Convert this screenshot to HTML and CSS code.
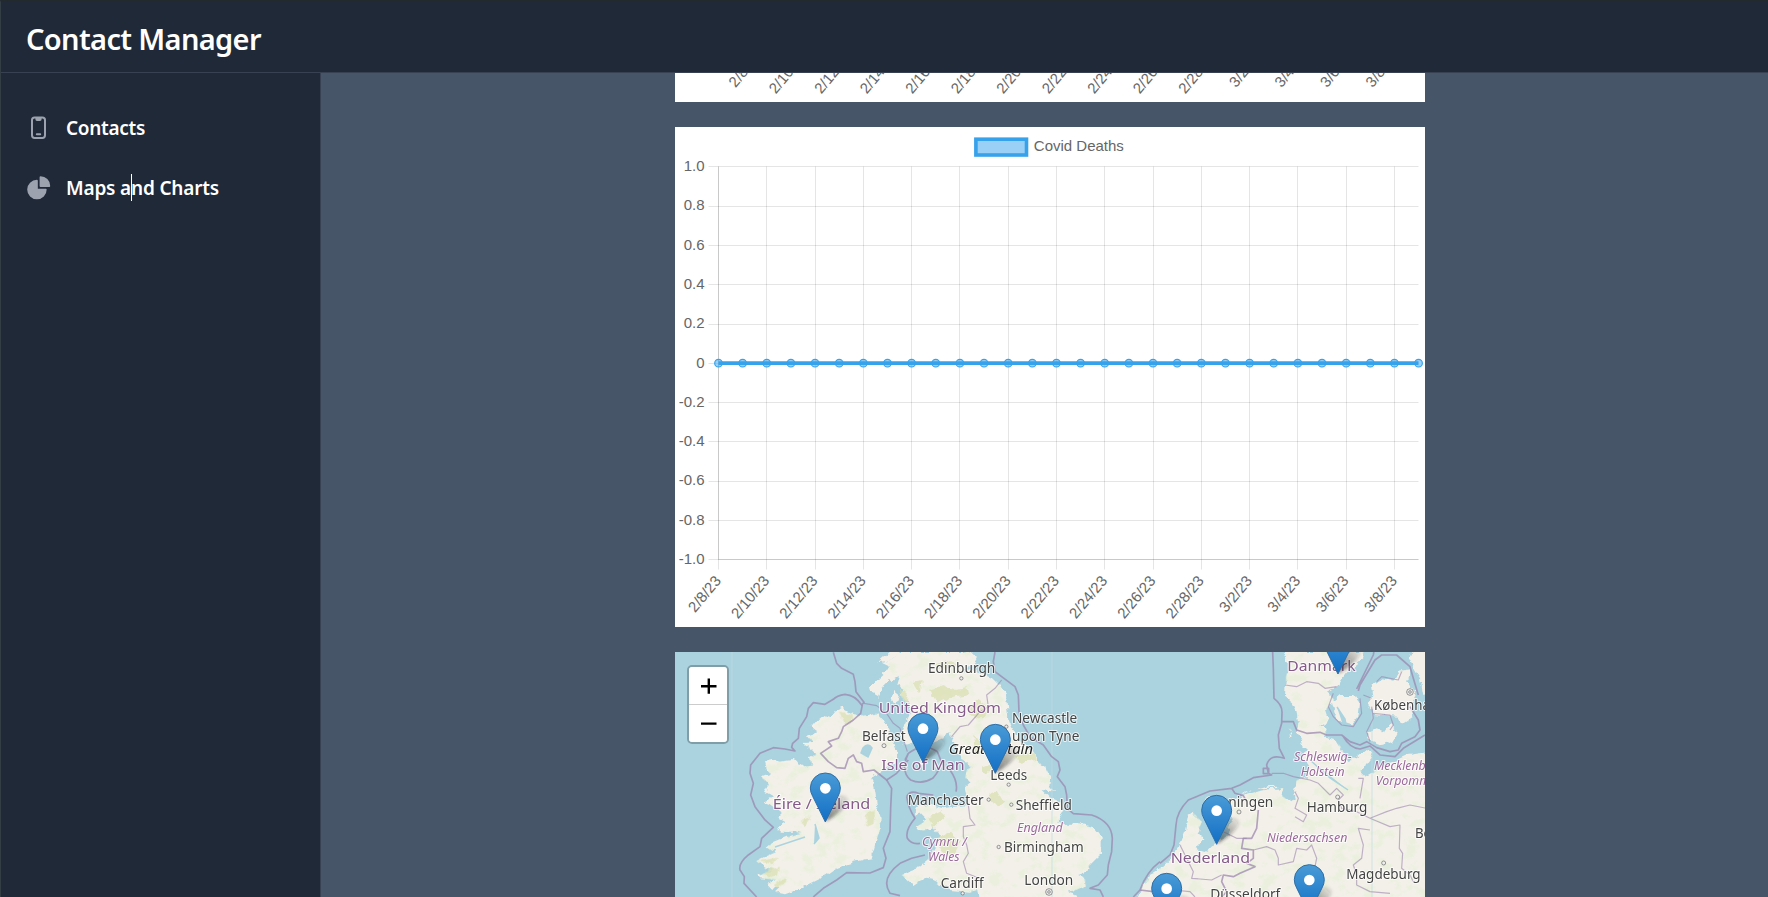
FILE: index.html
```html
<!DOCTYPE html>
<html lang="en">
<head>
<meta charset="utf-8">
<title>Contact Manager</title>
<link rel="stylesheet" href="styles.css">
</head>
<body>
<div class="app">
  <header class="topbar"><h1 class="brand">Contact Manager</h1></header>
  <div class="body">
    <nav class="sidebar">
      <a class="nav-item">
        <svg class="nav-icon" viewBox="0 0 28 28"><g fill="none" stroke="#9ca3af" stroke-width="2" stroke-linecap="round" stroke-linejoin="round"><rect x="8" y="3.5" width="13" height="20.4" rx="2.6"/><path d="M12.4 4v1.3q0 .6.6.6h3q.6 0 .6-.6V4zM12.8 20.3h3.4"/></g></svg>
        <span class="nav-label contacts">Contacts</span>
      </a>
      <a class="nav-item">
        <svg class="nav-icon" viewBox="-.45 .35 23.7 23.7" fill="#9ca3af"><path d="M2.25 13.5a8.25 8.25 0 0 1 8.25-8.25.75.75 0 0 1 .75.75v6.75H18a.75.75 0 0 1 .75.75 8.25 8.25 0 0 1-16.5 0z"/><path d="M12.75 3a.75.75 0 0 1 .75-.75 8.25 8.25 0 0 1 8.25 8.25.75.75 0 0 1-.75.75h-7.5a.75.75 0 0 1-.75-.75V3z"/></svg>
        <span class="nav-label maps">Maps and Charts<i class="caret"></i></span>
      </a>
    </nav>
    <main class="content">
      <section class="card card-cut"><svg id="cases" width="750" height="29"></svg></section>
      <section class="card"><svg id="deaths" width="750" height="500"></svg></section>
      <section class="card map">
        <svg width="750" height="245" viewBox="0 0 750 245">
          <defs>
            <linearGradient id="pin" x1="0" y1="0" x2="0" y2="1"><stop offset="0" stop-color="#4a9bd6"/><stop offset="1" stop-color="#126fc6"/></linearGradient>
            <linearGradient id="shade" x1="0" y1="1" x2=".8" y2="0"><stop offset="0" stop-color="#222" stop-opacity=".6"/><stop offset="1" stop-color="#222" stop-opacity=".08"/></linearGradient>
            <filter id="rough" x="-5%" y="-5%" width="110%" height="110%"><feTurbulence type="fractalNoise" baseFrequency=".13" numOctaves="3" seed="4"/><feDisplacementMap in="SourceGraphic" scale="7" xChannelSelector="R" yChannelSelector="G"/></filter>
            <filter id="soft" x="-50%" y="-50%" width="200%" height="200%"><feGaussianBlur stdDeviation="5"/></filter>
            <filter id="speck" x="0" y="0" width="100%" height="100%"><feTurbulence type="fractalNoise" baseFrequency=".07 .09" numOctaves="4" seed="11"/><feColorMatrix values="0 0 0 0 .80  0 0 0 0 .88  0 0 0 0 .70  0 6 0 0 -3.1"/><feComposite in2="SourceGraphic" operator="in"/></filter>
            <g id="marker"><path d="M2-2 L14-60 Q30-84 56-80 Q78-72 60-48 Q40-22 2-2Z" fill="url(#shade)" filter="url(#soft)"/><path d="M0 0L-38-77Q-45-89-45-102A45 45 0 0 1 45-102Q45-89 38-77Z" fill="url(#pin)" stroke="#2d6da5" stroke-width="3"/><circle cy="-101" r="16" fill="#fff"/></g>
            <path id="gb" d="M-10 21L-22 42-55 50-30 62-48 90-22 105 0 90-8 120 10 135 0 150 25 170 34 195 15 235 0 270 20 285 10 300 45 290 70 275 100 290 135 275 170 250 150 262 160 290 175 320 190 345 215 365 200 375 195 400 215 410 195 430 200 455 205 480 165 485 130 490 90 480 45 490 60 505 80 525 50 545 60 560 105 550 120 575 110 600 95 625 85 645 60 665 30 675 5 690 40 720 70 700 100 705 130 720 150 735 205 740 235 735 240 775 540 775 530 750 500 740 530 735 560 720 555 700 535 690 560 680 565 665 590 640 605 610 605 580 580 550 540 538 500 540 475 530 488 500 480 470 445 455 425 435 465 440 448 425 450 395 440 370 415 350 405 325 375 300 345 270 325 230 322 190 318 150 300 120 275 95 225 77 178 84 215 64 235 40 215 21Z"/>
            <path id="ie" d="M520 188L545 205 575 215 598 212 622 205 640 225 655 250 668 285 682 315 678 345 660 362 640 375 618 388 600 395 612 420 618 455 622 490 632 520 628 560 615 600 605 640 575 645 540 655 500 668 470 690 440 705 410 720 380 735 345 748 318 742 335 725 300 728 290 718 318 705 270 700 262 690 310 678 268 658 258 648 290 632 318 620 290 608 310 592 350 575 392 568 375 560 330 560 318 548 345 530 322 518 335 505 300 478 280 470 312 455 285 440 300 415 270 398 300 388 290 370 285 350 310 345 330 350 365 345 380 350 390 365 425 362 420 340 440 325 425 312 398 295 430 290 410 275 445 262 425 245 440 228 460 212 480 220 495 200Z"/>
            <path id="eu" d="M370 21L385 60 378 90 375 155 395 170 410 200 415 240 410 260 430 290 425 300 440 310 430 340 450 370 440 395 410 405 405 440 410 455 388 470 365 450 370 430 330 432 290 440 250 450 220 465 205 480 195 500 215 520 200 545 215 560 190 585 170 590 140 620 110 610 130 580 115 560 125 530 100 500 85 510 75 560 60 600 40 630 0 670-30 690-50 720-80 775 820 775 820 320 780 325 745 330 700 350 660 370 640 380 615 395 600 380 625 345 640 325 620 315 590 340 560 345 545 310 530 285 495 275 500 255 480 240 505 225 495 195 525 165 500 140 530 125 545 100 560 80 610 40 612 21Z"/>
            <path id="dk" d="M515 170L540 150 580 150 600 175 595 215 575 240 540 230 525 205ZM635 120L665 100 700 110 720 80 750 75 745 110 770 150 755 180 760 220 730 240 715 215 640 210 625 180 640 150ZM620 265L650 250 675 262 690 240 715 262 700 290 665 300 630 285ZM760 10L820 10 820 140 790 150 780 100 750 50Z"/>
          </defs>
          <rect width="750" height="245" fill="#aad3df"/>
          <g fill="#f3f0e9" filter="url(#rough)">
            <use href="#ie" transform="translate(-5 -7) scale(.3333)"/>
            <g transform="translate(225 -7) scale(.3333)"><use href="#gb"/><path d="M-90 130L-62 98-32 72-20 85-48 120-65 155-86 144ZM-65 48L-30 18 0 18-25 44ZM-20 138L-2 152-12 180-28 165ZM50 355L66 338 74 348 62 364ZM45 490L70 475 80 492 50 508Z"/></g>
            <g transform="translate(485 -7) scale(.3333)"><use href="#eu"/><use href="#dk"/><path d="M388 250L398 275 390 278ZM240 447L258 436 275 436ZM286 433L320 424 350 422 350 426Z"/></g>
          </g>
          <g filter="url(#speck)" opacity=".75">
            <use href="#ie" transform="translate(-5 -7) scale(.3333)"/><use href="#gb" transform="translate(225 -7) scale(.3333)"/><use href="#eu" transform="translate(485 -7) scale(.3333)"/>
          </g>
          <g class="moor" filter="url(#rough)">
            <g transform="translate(225 -7) scale(.3333)"><path d="M85 130L130 120 165 135 200 130 205 150 150 160 110 175ZM200 185L235 165 270 190 245 220 210 205ZM220 270L245 290 240 330 225 330ZM245 365L270 355 280 380 255 385ZM345 330L405 325 410 345 360 350ZM85 515L125 495 130 520 100 550ZM110 575L150 560 180 590 155 640 125 620ZM40 110L65 105 60 140 45 130ZM265 450L290 440 310 475 295 485ZM100 60L140 45 165 60 130 75ZM0 135L20 142 18 170 5 165Z"/></g>
            <g transform="translate(-5 -7) scale(.3333)"><path d="M510 200L545 205 550 225 525 240ZM260 650L320 638 310 655ZM280 680L330 665 325 690 295 700ZM590 500L615 495 610 540 592 545ZM310 720L340 700 350 712 325 730ZM390 525L425 515 405 545Z"/></g>
          </g>
          <g class="water"><path d="M188 96q5-6 9 0l-4 9-7-4ZM140 172l4 14-5 6M100 195l30-10M545 62l18 16M662 55l8 12 5 28M635 108l20 18 18 12"/></g>
          <path d="M57 0V245M377 0V245M697 60V245" stroke="#bedce2" stroke-width=".7"/>
          <g class="border" transform="translate(-5 -7) scale(.3333)">
            <path d="M490 22L500 55 515 70 550 88 555 110 558 140 582 172 575 180Q555 150 525 148 500 152 490 163L465 178 430 173 415 190 410 215 388 250 385 280 368 295 365 307 375 318 345 312 310 308 270 325 242 360 240 385 250 415 242 450 255 485 285 525 310 547 275 580 270 605 235 630 Q205 655 210 675L223 695 222 715 260 756M650 405L665 430 662 490 660 560 640 610 648 640 640 668 600 684 530 683 500 705 460 730 430 756"/>
            <path d="M577 180L572 205 550 225 520 245 515 260 505 280 475 290 485 303 452 325 475 350 500 368 525 370 535 340 550 330 560 350 575 355 580 380 612 375 650 405 680 385 715 345"/><path class="thin" d="M582 175L620 182 650 205 670 235 690 250 712 320"/>
          </g>
          <g class="border" transform="translate(225 -7) scale(.3333)">
            <path d="M285 21L280 50 285 80 305 95 345 125 355 150 357 200 370 240 390 275 430 300 455 335 475 350 480 375 472 395 495 425 500 450 502 490 520 506 575 510 Q635 530 637 580L635 620 625 660 622 690 595 720 570 730 600 735 610 756"/>
            <path d="M25 325Q0 380 32 405 65 420 98 400 125 370 122 345L112 320Q70 290 25 325M25 325L15 345M0 655Q-60 700-30 745L0 752M0 655L35 640 75 630M20 455Q30 435 55 445L100 450M20 455Q25 490 45 520 15 555 22 580 35 600 60 595M150 375Q175 410 168 440M780 650Q740 680 720 735L700 756M720 735L760 740"/>
            <path class="thin" d="M305 105L285 130 260 150 265 185 240 200 205 240 180 245 155 275M205 480L210 520 225 540 190 545 190 575 200 600 205 625 190 650 200 685 230 697"/>
          </g>
          <g class="border" transform="translate(485 -7) scale(.3333)">
            <path d="M338 21L340 70 342 160Q368 180 366 205L365 235 355 270 358 310 373 340Q330 325 320 360L325 385 335 390 280 398 240 420 215 430 150 438 85 465Q50 500 48 540L42 600 30 630 0 655M310 370h16v16h-16ZM365 230L400 230 410 255 440 265 480 262 500 270 545 270 570 290 600 300 620 290 650 308 690 320 715 315 725 295 765 275 780 255 775 225 750 185M550 275Q570 310 600 312L630 303 660 330 705 335 730 310 795 270M595 138L600 120 645 45 665 30 710 30 750 65 760 100 775 150M590 132L640 30 642 18M215 430L225 445 250 452 260 470M295 495L290 550 275 580 250 580L245 610 280 615 280 640 260 655 285 665 240 685 220 695 190 690 185 710 200 740 185 756"/>
            <path class="thin" d="M375 120L410 125 440 110 475 115 495 130 530 125M335 385L370 385 400 395 450 405 475 415 510 450M190 560L230 580 260 580M280 615L320 605 345 615 355 640 355 660 400 650 410 610 440 615 455 600 470 640 460 690 410 700M405 440L415 460 405 490 440 510 430 530 405 515M510 450L530 430 550 450 535 465 545 490 590 500 630 520M600 460L610 400 595 400M630 520L680 500 710 490 750 480 800 490M630 520L690 545 720 540 718 610 728 625 725 670 750 690 760 710M630 555L595 550 610 600 605 640 580 660 590 690 590 720 630 740 690 745M60 600L100 680 95 700 155 705 185 690M0 700L40 735 90 740 105 756"/>
            <path class="thin" d="M520 145L505 185 520 215 545 240 580 245 605 205 600 160M610 150L635 160M640 205L690 210 700 240 690 255M635 185L640 220 620 260 630 290M650 110L665 95 715 105 725 80"/>
          </g>
          <g class="labels" transform="translate(225 -7) scale(.3333)">
            <g class="dot"><circle cx="184" cy="100" r="5"/><circle cx="319" cy="245" r="5"/><circle cx="326" cy="419" r="5"/><circle cx="266" cy="464" r="5"/><circle cx="334" cy="479" r="5"/><circle cx="296" cy="606" r="5"/><circle cx="188" cy="745" r="5"/><circle cx="-48" cy="302" r="6"/><circle cx="447" cy="741" r="10"/><circle cx="447" cy="741" r="4"/></g>
            <text x="84" y="84" textLength="202" lengthAdjust="spacingAndGlyphs">Edinburgh</text>
            <text class="country" x="-64" y="205" textLength="367" lengthAdjust="spacingAndGlyphs">United Kingdom</text>
            <text x="336" y="235" textLength="196" lengthAdjust="spacingAndGlyphs">Newcastle</text><text x="336" y="287" textLength="202" lengthAdjust="spacingAndGlyphs">upon Tyne</text>
            <text class="island" x="146" y="327" textLength="253" lengthAdjust="spacingAndGlyphs">Great Britain</text>
            <text x="-114" y="287" textLength="131" lengthAdjust="spacingAndGlyphs">Belfast</text>
            <text class="country" x="-56" y="376" textLength="250" lengthAdjust="spacingAndGlyphs">Isle of Man</text>
            <text x="271" y="404" textLength="111" lengthAdjust="spacingAndGlyphs">Leeds</text><text x="23" y="479" textLength="228" lengthAdjust="spacingAndGlyphs">Manchester</text><text x="347" y="495" textLength="169" lengthAdjust="spacingAndGlyphs">Sheffield</text>
            <text class="region" x="351" y="561" textLength="137" lengthAdjust="spacingAndGlyphs">England</text><text x="312" y="622" textLength="239" lengthAdjust="spacingAndGlyphs">Birmingham</text>
            <text class="region" x="66" y="603" textLength="134" lengthAdjust="spacingAndGlyphs">Cymru /</text><text class="region" x="84" y="648" textLength="95" lengthAdjust="spacingAndGlyphs">Wales</text>
            <text x="122" y="730" textLength="129" lengthAdjust="spacingAndGlyphs">Cardiff</text><text x="373" y="719" textLength="147" lengthAdjust="spacingAndGlyphs">London</text>
            <text class="country" x="-382" y="492" textLength="293" lengthAdjust="spacingAndGlyphs">Éire / Ireland</text>
          </g>
          <g class="labels" transform="translate(485 -7) scale(.3333)">
            <g class="dot"><circle cx="237" cy="501" r="6"/><circle cx="533" cy="456" r="6"/><circle cx="671" cy="654" r="6"/><circle cx="750" cy="141" r="10"/><circle cx="750" cy="141" r="4"/></g>
            <text class="country" x="382" y="77" textLength="205" lengthAdjust="spacingAndGlyphs">Danmark</text><text x="642" y="195" textLength="213" lengthAdjust="spacingAndGlyphs">København</text>
            <text class="region" x="402" y="347" textLength="173" lengthAdjust="spacingAndGlyphs">Schleswig-</text><text class="region" x="422" y="392" textLength="132" lengthAdjust="spacingAndGlyphs">Holstein</text>
            <text class="region" x="642" y="375" textLength="224" lengthAdjust="spacingAndGlyphs">Mecklenburg-</text><text class="region" x="647" y="419" textLength="218" lengthAdjust="spacingAndGlyphs">Vorpommern</text>
            <text x="134" y="487" textLength="206" lengthAdjust="spacingAndGlyphs">Groningen</text><text x="440" y="502" textLength="182" lengthAdjust="spacingAndGlyphs">Hamburg</text>
            <text class="region" x="321" y="592" textLength="241" lengthAdjust="spacingAndGlyphs">Niedersachsen</text><text class="country" x="32" y="655" textLength="238" lengthAdjust="spacingAndGlyphs">Nederland</text>
            <text x="765" y="579" textLength="110" lengthAdjust="spacingAndGlyphs">Berlin</text><text x="559" y="703" textLength="223" lengthAdjust="spacingAndGlyphs">Magdeburg</text><text x="151" y="762" textLength="210" lengthAdjust="spacingAndGlyphs">Düsseldorf</text>
          </g>
          <g transform="translate(225 -7) scale(.3333)"><use href="#marker" x="69" y="352"/><use href="#marker" x="286" y="385"/><use href="#marker" x="-224" y="531"/></g>
          <g transform="translate(485 -7) scale(.3333)"><use href="#marker" x="534" y="87"/><use href="#marker" x="170" y="598"/><use href="#marker" x="448" y="806"/><use href="#marker" x="20" y="832"/></g>
        </svg>
        <div class="zoom">
          <a class="zoom-btn"><svg width="38" height="37"><path d="M12 19.2H27.5M19.8 11.5V26.8" stroke="#000" stroke-width="2.4"/></svg></a>
          <a class="zoom-btn"><svg width="38" height="37"><path d="M12 18.6H27.5" stroke="#000" stroke-width="2.2"/></svg></a>
        </div>
      </section>
    </main>
  </div>
</div>
<script src="charts.js"></script>
</body>
</html>
```
FILE: styles.css
```css
* { box-sizing: border-box; }
body { margin: 0; background: #475569; overflow: hidden; }
.app { height: 897px; display: flex; flex-direction: column; border-top: 2px solid #222a2e; border-left: 1px solid #323d44; }
.topbar { height: 71px; flex: none; display: flex; align-items: center; padding: 3px 25px 0; background: #1f2937; border-bottom: 1px solid #374151; }
.brand { margin: 0; font: 600 29px/38px "Noto Sans", sans-serif; color: #fff; letter-spacing: -.65px; white-space: nowrap; }
.body { flex: 1; min-height: 0; display: flex; }
.sidebar { width: 320px; flex: none; padding: 30px 0 0 23px; background: #1f2937; border-right: 1px solid #374151; }
.nav-item { height: 60px; display: flex; align-items: center; gap: 14px; padding-bottom: 10px; }
.nav-icon { width: 28px; height: 28px; flex: none; }
.nav-label { position: relative; font: 600 19px/27px "Noto Sans", sans-serif; color: #fff; white-space: nowrap; }
.contacts { letter-spacing: -.3px; }
.maps { letter-spacing: -.18px; }
.caret { position: absolute; left: 65px; top: -1px; width: 1px; height: 27px; background: #fff; }
.content { flex: 1; display: flex; flex-direction: column; align-items: center; gap: 25px; padding-left: 11px; }
.card { width: 750px; height: 500px; flex: none; background: #fff; overflow: hidden; }
.card svg { display: block; }
.card-cut { height: 29px; }
.map { position: relative; height: 245px; }
.chart-text { font: 15px "Liberation Sans", Arial, sans-serif; fill: #666; }
.labels text { font: 42px "Noto Sans", sans-serif; fill: #444; stroke: rgba(255,255,255,.75); stroke-width: 6px; stroke-linejoin: round; paint-order: stroke; }
.labels .country { font-size: 45px; fill: #85598a; }
.labels .region { font-size: 38px; font-style: italic; fill: #9b689b; }
.labels .island { font-style: italic; fill: #222; }
.dot circle { fill: #eee; stroke: #666; stroke-width: 2px; }
.border path { fill: none; stroke: #9a83ac; stroke-width: 5px; opacity: .72; stroke-linejoin: round; }
.border .thin { stroke-width: 3.5px; opacity: .6; }
.moor { fill: #dce1b6; opacity: .8; }
.water { fill: #aad3df; stroke: #aad3df; stroke-width: 1.5px; }
.zoom { position: absolute; left: 12px; top: 13px; width: 42px; border: 2px solid rgba(0,0,0,.25); border-radius: 5px; background-clip: padding-box; overflow: hidden; }
.zoom-btn { display: block; height: 37px; background: #fff; }
.zoom-btn + .zoom-btn { height: 38px; border-top: 1px solid #ccc; }
```
FILE: charts.js
```js
const NS = 'http://www.w3.org/2000/svg';
function add(svg, tag, attrs, text) {
  const el = document.createElementNS(NS, tag);
  for (const k in attrs) el.setAttribute(k, attrs[k]);
  if (text !== undefined) el.textContent = text;
  svg.appendChild(el);
  return el;
}
const days = ['2/8/23', '2/10/23', '2/12/23', '2/14/23', '2/16/23', '2/18/23', '2/20/23', '2/22/23',
  '2/24/23', '2/26/23', '2/28/23', '3/2/23', '3/4/23', '3/6/23', '3/8/23'];
function dateLabels(svg, first, step, y) {
  days.forEach((d, i) => {
    add(svg, 'text', { class: 'chart-text', 'text-anchor': 'end', y: 5,
      transform: `translate(${first + i * step} ${y}) rotate(-50)` }, d);
  });
}

dateLabels(document.getElementById('cases'), 83.5, 45.5, -20);

const chart = document.getElementById('deaths');
const left = 43.5, right = 743.5, top0 = 39.5, bottom = 432.5;
const labels = ['1.0', '0.8', '0.6', '0.4', '0.2', '0', '-0.2', '-0.4', '-0.6', '-0.8', '-1.0'];
labels.forEach((t, i) => {
  const gy = Math.floor(39.9 + i * 39.3) + (i === 10 ? -0.5 + 1 : 0.5);
  const y = Math.min(gy, bottom);
  add(chart, 'path', { d: `M33.5 ${y}H${right}`, stroke: '#000', 'stroke-opacity': 0.1 });
  add(chart, 'text', { class: 'chart-text', 'text-anchor': 'end', x: 29.5, y: top0 + i * 39.3 + 4.5 }, t);
});
days.forEach((d, i) => {
  const x = Math.floor(left + i * 48.28) + 0.5;
  add(chart, 'path', { d: `M${x} ${top0}V442.5`, stroke: '#000', 'stroke-opacity': 0.1 });
});
add(chart, 'path', { d: `M${left} ${top0}V${bottom}H${right}`, fill: 'none', stroke: '#000', 'stroke-opacity': 0.12 });
dateLabels(chart, 43, 48.28, 451);
add(chart, 'path', { d: `M${left} 236.2H${right}`, stroke: '#36a2eb', 'stroke-width': 3.8 });
for (let i = 0; i < 30; i++) {
  add(chart, 'circle', { cx: left + i * 24.14, cy: 236.2, r: 3.8, fill: 'rgba(54,162,235,.5)', stroke: '#36a2eb', 'stroke-width': 1.2 });
}
add(chart, 'rect', { x: 300.9, y: 12.2, width: 50.6, height: 15.8, fill: '#9ad0f5', stroke: '#36a2eb', 'stroke-width': 3.6 });
add(chart, 'text', { class: 'chart-text', x: 358.8, y: 24 }, 'Covid Deaths');
```
